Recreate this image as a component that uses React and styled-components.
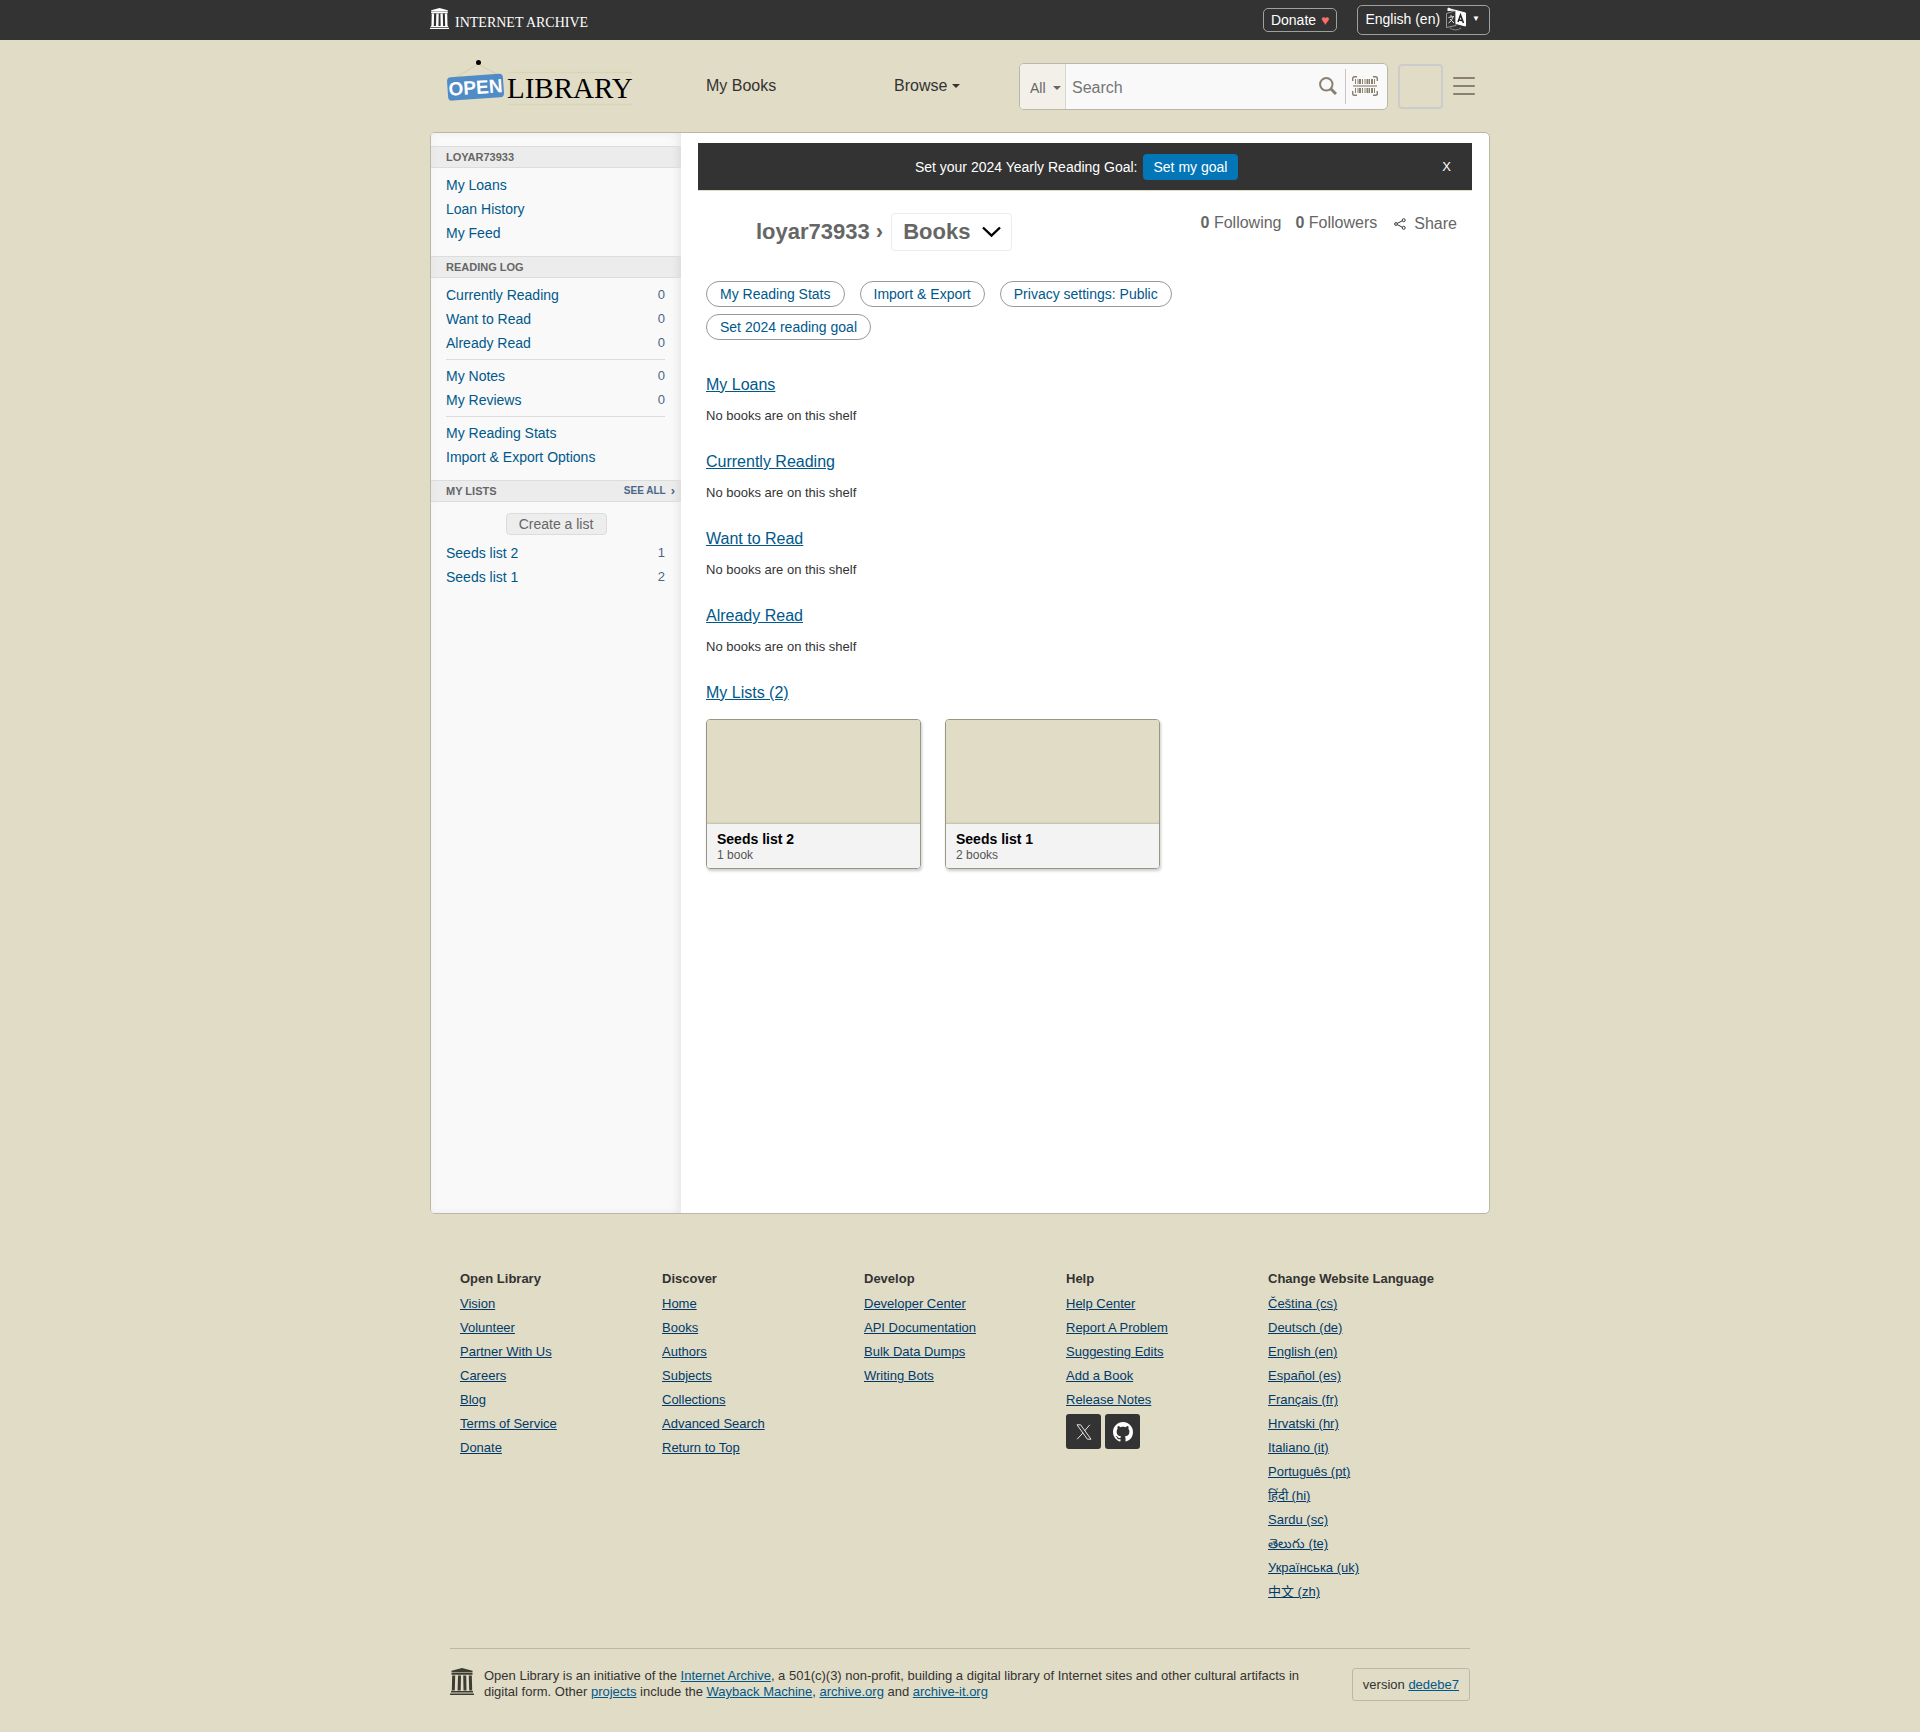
import React from "react";
import styled, { createGlobalStyle, css } from "styled-components";

const beige = "#e1dcc5";
const link = "#00588b";
const sans = `"Liberation Sans", Arial, "Noto Sans CJK SC", sans-serif`;

const GlobalStyle = createGlobalStyle`
  *, *::before, *::after { box-sizing: border-box; }
  body { margin: 0; background: ${beige}; color: #333; font: 14px/20px ${sans}; }
  h1, h2, h3, p, ul { margin: 0; padding: 0; }
  ul { list-style: none; }
  button, input, select { font: inherit; color: inherit; margin: 0; }
  button { cursor: pointer; }
  svg { display: block; flex: none; }
`;

const Wrap = styled.div`
  width: 100%;
  max-width: 1060px;
  margin: 0 auto;
`;

/* ---- top bar ---- */

const TopBar = styled.div`
  background: #333;
  color: #fff;
`;
const TopInner = styled(Wrap)`
  display: flex;
  align-items: center;
  height: 40px;
`;
const ArchiveLink = styled.a`
  margin-right: auto;
  padding-bottom: 2px;
  color: #fff;
`;
const topControl = css`
  display: flex;
  align-items: center;
  color: #fff;
  border: 1px solid #a0a0a0;
  border-radius: 5px;
  background: none;
  text-decoration: none;
`;
const DonateLink = styled.a`
  ${topControl}
  height: 24px;
  padding: 0 7px;
  gap: 5px;
  margin-right: 20px;
`;
const Heart = styled.span`
  color: #ff6f6f;
`;
const LanguageButton = styled.button`
  ${topControl}
  height: 30px;
  padding: 0 9px 2px 7px;
  gap: 6px;
`;
const Caret = styled.span`
  font-size: 8px;
`;

/* ---- header ---- */

const Header = styled.header`
  display: flex;
  align-items: center;
  height: 92px;
  padding: 0 15px;
`;
const LogoLink = styled.a`
  flex: none;
  width: 261px;
  padding-bottom: 8px;
`;
const NavLink = styled.a`
  width: 188px;
  font-size: 16px;
  color: #333;
  text-decoration: none;
`;
const BrowseButton = styled.button`
  display: flex;
  align-items: center;
  gap: 5px;
  width: 125px;
  border: 0;
  padding: 0;
  background: none;
  font-size: 16px;
  color: #333;
`;
const Triangle = styled.span`
  border: 4px solid transparent;
  border-top-color: currentColor;
  border-bottom: 0;
`;
const SearchForm = styled.form`
  display: flex;
  align-items: stretch;
  flex: 1;
  min-width: 0;
  height: 47px;
  padding-right: 3px;
  border: 1px solid #b8b8aa;
  border-radius: 5px;
  background: #f9f9f9;
  overflow: hidden;
`;
const FacetLabel = styled.label`
  display: flex;
  align-items: center;
  width: 46px;
  padding: 4px 4px 0 10px;
  background: #f3f0e9;
  border-right: 1px solid #d8d6cf;
  color: #666;
`;
const FacetSelect = styled.select`
  appearance: none;
  width: 24px;
  border: 0;
  padding: 0;
  background: none;
`;
const SearchInput = styled.input`
  flex: 1;
  min-width: 0;
  border: 0;
  padding: 4px 6px 0;
  background: none;
  font-size: 16px;
  outline: none;
  &::placeholder { color: #757575; opacity: 1; }
`;
const IconButton = styled.button`
  display: flex;
  align-items: center;
  justify-content: center;
  width: ${(p) => p.$w}px;
  border: 0;
  padding: 0;
  background: none;
`;
const SearchRule = styled.span`
  width: 1px;
  margin: 5px 0;
  background: #c8c5bf;
`;
const Avatar = styled.a`
  width: 45px;
  height: 45px;
  margin: 0 10px;
  border: 2px solid #ccc;
  border-radius: 4px;
`;

/* ---- content ---- */

const Content = styled(Wrap)`
  display: flex;
  min-height: 1082px;
  border: 1px solid #b8b8a6;
  border-radius: 5px;
  background: #fff;
  overflow: hidden;
`;
const Sidebar = styled.nav`
  flex: none;
  width: 250px;
  padding-top: 13px;
  background: #f9f9f9;
  box-shadow: inset -6px 0 12px -6px #e2e2e2, inset 0 0 8px #f1f1f1;
`;
const SideHeading = styled.h2`
  display: flex;
  align-items: center;
  height: 22px;
  padding: 0 6px 0 15px;
  border: solid #dcdcdc;
  border-width: 1px 0;
  background: rgba(0, 0, 0, 0.05);
  font-size: 11px;
  line-height: 20px;
  text-transform: uppercase;
  color: #666;
`;
const SeeAll = styled.a`
  margin-left: auto;
  font-size: 10px;
  color: #4b6587;
  text-decoration: none;
`;
const SeeChevron = styled.span`
  margin-left: 5px;
  font-size: 13px;
  color: #4b6587;
`;
const SideList = styled.ul`
  padding: ${(p) => (p.$tight ? "0 16px 11px 15px" : "5px 16px 11px 15px")};
`;
const SideItem = styled.li`
  ${(p) => p.$rule && css`
    border-top: 1px solid #dcdcdc;
    margin-top: 4px;
    padding-top: 4px;
  `}
`;
const SideLink = styled.a`
  display: flex;
  justify-content: space-between;
  line-height: 24px;
  color: ${link};
  text-decoration: none;
`;
const Count = styled.span`
  font-size: 13px;
  color: #4b6587;
`;
const CreateButton = styled.button`
  display: block;
  width: 101px;
  height: 22px;
  margin: 11px auto 6px;
  border: 1px solid #dcdcdc;
  border-radius: 4px;
  padding: 0;
  background: #ededed;
  line-height: 20px;
  color: #666;
`;

const Main = styled.main`
  flex: 1;
  min-width: 0;
  padding: 10px 17px 40px;
`;
const Banner = styled.div`
  display: flex;
  align-items: center;
  height: 48px;
  padding: 0 21px 0 13px;
  border-bottom: 1px solid ${beige};
  background: #333;
  color: #fff;
`;
const BannerText = styled.div`
  display: flex;
  flex: 1;
  align-items: center;
  justify-content: center;
  gap: 5px;
`;
const GoalButton = styled.button`
  height: 26px;
  border: 0;
  border-radius: 4px;
  padding: 0 11px;
  background: #0376b8;
  color: #fff;
`;
const CloseButton = styled.button`
  border: 0;
  padding: 0;
  background: none;
  font-size: 13px;
  color: #fff;
`;
const Body = styled.div`
  padding: 0 8px;
`;
const TitleRow = styled.div`
  display: flex;
  align-items: flex-start;
  padding: 22px 7px 0 50px;
  color: #666;
`;
const Title = styled.h1`
  display: flex;
  align-items: center;
  gap: 8px;
  font-size: 22px;
  line-height: 36px;
`;
const ShelfButton = styled.button`
  display: flex;
  align-items: center;
  gap: 12px;
  height: 38px;
  border: 1px solid #ececec;
  border-radius: 4px;
  padding: 0 10px 0 11px;
  background: none;
  font-weight: bold;
`;
const Stats = styled.div`
  display: flex;
  gap: 14px;
  margin-left: auto;
  font-size: 16px;
`;
const ShareButton = styled.button`
  display: flex;
  align-items: center;
  gap: 8px;
  border: 0;
  padding: 1px 0 0 3px;
  background: none;
`;
const Pills = styled.div`
  display: flex;
  flex-wrap: wrap;
  gap: 7px 15px;
  max-width: 500px;
  margin: 30px 0 34px;
`;
const Pill = styled.a`
  height: 26px;
  padding: 0 13px;
  border: 1px solid #999;
  border-radius: 13px;
  line-height: 24px;
  color: ${link};
  text-decoration: none;
`;
const Shelf = styled.section`
  height: 77px;
`;
const ShelfTitle = styled.h2`
  font-size: 16px;
  font-weight: normal;
  line-height: 22px;
  a { color: ${link}; }
`;
const ShelfEmpty = styled.p`
  padding-top: 10px;
  font-size: 13px;
`;
const Cards = styled.div`
  display: flex;
  flex-wrap: wrap;
  gap: 24px;
  padding-top: 15px;
`;
const Card = styled.a`
  width: 215px;
  border: 1px solid #999783;
  border-radius: 4px;
  box-shadow: 1px 2px 3px rgba(0, 0, 0, 0.2);
  overflow: hidden;
  color: #000;
  text-decoration: none;
`;
const CardCover = styled.div`
  height: 104px;
  background: ${beige};
  box-shadow: inset 0 -3px 2px -2px #c2bda5;
`;
const CardText = styled.div`
  padding: 7px 10px 6px;
  background: #f3f3f3;
`;
const CardTitle = styled.h3`
  font-size: 14px;
  line-height: 17px;
`;
const CardMeta = styled.p`
  font-size: 12px;
  line-height: 14px;
  color: #555;
`;

/* ---- footer ---- */

const Footer = styled.footer`
  width: 100%;
  max-width: 1020px;
  margin: 0 auto;
  padding-bottom: 29px;
  font-size: 13px;
`;
const FooterColumns = styled.div`
  display: grid;
  grid-template-columns: repeat(5, 1fr);
  padding: 53px 0 44px 10px;
  line-height: 24px;
`;
const FooterTitle = styled.h2`
  margin-bottom: 1px;
  font-size: 13px;
  line-height: 24px;
`;
const FooterItem = styled.li`
  height: 24px;
  a { color: #003a6b; }
`;
const Socials = styled.div`
  display: flex;
  gap: 4px;
  padding-top: 2px;
`;
const Social = styled.a`
  display: flex;
  align-items: center;
  justify-content: center;
  width: 35px;
  height: 35px;
  border-radius: 3px;
  background: #333;
  color: #fff;
`;
const Colophon = styled.div`
  display: flex;
  align-items: flex-start;
  gap: 10px;
  padding-top: 19px;
  border-top: 1px solid #b9b9a8;
  a { color: ${link}; }
`;
const About = styled.p`
  max-width: 850px;
  margin-right: auto;
  line-height: 16px;
`;
const Version = styled.div`
  padding: 0 10px;
  border: 1px solid #b9b9a8;
  border-radius: 3px;
  line-height: 31px;
  white-space: nowrap;
`;

/* ---- drawings ---- */

const Temple = ({ w, h, color }) => (
  <svg width={w} height={h} viewBox="0 0 24 27" fill={color}>
    <path d="M12 0 22.500 2.800v1.400h-21V2.800z" />
    <path d="M1.500 4.800h21v2h-21zM0 25.400h24V27H0zM1 23h22v1.400H1z" />
    <path d="M2.200 7.500h3l-.4 15H1.800zM8 7.500h3l-.3 15H7.600zM13.200 7.500h3l.3 15h-3zM18.800 7.500h3l.4 15h-3z" />
  </svg>
);

const ArchiveLogo = () => (
  <svg width="164" height="24" viewBox="0 0 164 24" fill="#fff" role="img" aria-label="Internet Archive">
    <g transform="translate(0 1) scale(.79 .78)">
      <path d="M12 0 22.500 2.800v1.400h-21V2.800z" />
      <path d="M1.500 4.500h21v2.300h-21zM0 25.400h24V27H0zM1 23h22v1.400H1z" />
      <path d="M2.200 7h3l-.4 16H1.800zM8 7h3l-.3 16H7.600zM13.200 7h3l.3 16h-3zM18.800 7h3l.4 16h-3z" />
    </g>
    <text x="25" y="20" fontFamily="Liberation Serif, serif" fontSize="14">INTERNET ARCHIVE</text>
  </svg>
);

const OpenLibraryLogo = () => (
  <svg width="190" height="52" viewBox="0 0 190 52" role="img" aria-label="Open Library">
    <path d="M5 25 33 8l24 13" fill="none" stroke="#d3ccae" />
    <circle cx="33.500" cy="6.500" r="2.500" />
    <path d="M63 16.500h124M63 48.500h124" stroke="#d9d3ba" strokeWidth="1.500" />
    <g transform="rotate(-4 30 31)">
      <rect x="2.500" y="19.500" width="56" height="23.500" rx="4" fill="#4f8bc4" />
      <text x="30.500" y="38" textAnchor="middle" fontFamily="Liberation Sans, sans-serif" fontWeight="bold" fontSize="19" fill="#fff">OPEN</text>
    </g>
    <text x="62" y="42" fontFamily="Liberation Serif, serif" fontSize="29">LIBRARY</text>
  </svg>
);

const TranslateIcon = () => (
  <svg width="20" height="24" viewBox="0 0 20 24" fill="none" stroke="#ddd">
    <path d="M.5 6.500 10 3.500v15L.5 20.500z" stroke="#999" />
    <path d="M2.500 10.500 8 9.500M5 8v2M7 10c-.8 2.500-2.500 5-4.500 6M4 12l4 4" />
    <path d="M10 3.500 19.500 6v13L10 16.500z" fill="#fff" stroke="#fff" />
    <path d="m12 15 2.500-7 3 8M13 13l4 .8" stroke="#222" strokeWidth="1.500" />
    <path d="M2 4V1l4 1.500 4 1" fill="#fff" stroke="#fff" />
    <path d="M4 21c3 2.500 8 2.500 11 0" stroke="#888" />
  </svg>
);

const SearchIcon = () => (
  <svg width="18" height="18" viewBox="0 0 18 18" fill="none" stroke="#8b7f70" strokeWidth="2">
    <circle cx="7.300" cy="7.300" r="6.200" />
    <path d="m12 12 5 5" strokeWidth="3" />
  </svg>
);

const BarcodeIcon = () => (
  <svg width="26" height="20" viewBox="0 0 26 20" fill="none" stroke="#8b7f70">
    <path d="M.7 5V2.500Q.7.700 2.500.7H5M21 .7h2.500q1.800 0 1.800 1.800V5M.7 15v2.500q0 1.800 1.800 1.800H5M21 19.300h2.500q1.800 0 1.800-1.800V15" strokeWidth="1.400" />
    <path d="M3.500 3v5M6 3v5M10.500 3v5M13 3v5M17.500 3v5M22.500 3v5M3.500 12v5M6 12v5M10.500 12v5M13 12v5M17.500 12v5M22.500 12v5" />
    <path d="M8 3v5M15.500 3v5M20 3v5M8 12v5M15.500 12v5M20 12v5" strokeWidth="2" />
    <path d="M1 10h24" stroke="#b9b2a8" strokeWidth="2" />
  </svg>
);

const MenuIcon = () => (
  <svg width="22" height="18" viewBox="0 0 22 18" stroke="#8b7f70" strokeWidth="2" strokeLinecap="round">
    <path d="M1 1h20M1 9h20M1 17h20" />
  </svg>
);

const ChevronIcon = () => (
  <svg width="19" height="12" viewBox="0 0 19 12" fill="none" stroke="#000" strokeWidth="2.400">
    <path d="m1 1.500 8.500 8 8.500-8" />
  </svg>
);

const ShareIcon = () => (
  <svg width="12" height="12" viewBox="0 0 12 12" fill="none" stroke="#333">
    <circle cx="2" cy="6" r="1.400" />
    <circle cx="9.700" cy="2.200" r="1.500" />
    <circle cx="9.700" cy="9.800" r="1.500" />
    <path d="m3.300 5.300 5-2.500M3.300 6.700l5 2.500" />
  </svg>
);

const XIcon = () => (
  <svg width="16" height="16" viewBox="0 0 16 16" fill="none" stroke="#e6e6e6">
    <path d="M1 .8h3.600L15 15.200h-3.600zM13.800.8 8.600 6.800M7 8.800 1.200 15.200" />
  </svg>
);

const GithubIcon = () => (
  <svg width="20" height="20" viewBox="0 0 16 16" fill="currentColor">
    <path d="M8 0C3.580 0 0 3.580 0 8c0 3.540 2.290 6.530 5.470 7.590.4.070.55-.17.55-.38 0-.19-.01-.82-.01-1.490-2.010.37-2.530-.49-2.690-.94-.09-.23-.48-.94-.82-1.130-.28-.15-.68-.52-.01-.53.63-.01 1.080.58 1.230.82.72 1.210 1.870.87 2.330.66.07-.52.28-.87.51-1.070-1.780-.2-3.640-.89-3.640-3.950 0-.87.31-1.590.82-2.150-.08-.2-.36-1.020.08-2.120 0 0 .67-.21 2.200.82.64-.18 1.320-.27 2-.27s1.360.09 2 .27c1.530-1.040 2.200-.82 2.200-.82.44 1.100.16 1.920.08 2.120.51.56.82 1.270.82 2.150 0 3.070-1.870 3.750-3.650 3.950.29.25.54.73.54 1.480 0 1.070-.01 1.930-.01 2.200 0 .21.15.46.55.38A8.010 8.010 0 0 0 16 8c0-4.420-3.580-8-8-8z" />
  </svg>
);

/* ---- data ---- */

const account = [["My Loans"], ["Loan History"], ["My Feed"]];
const readingLog = [
  ["Currently Reading", 0], ["Want to Read", 0], ["Already Read", 0],
  ["My Notes", 0, true], ["My Reviews", 0],
  ["My Reading Stats", null, true], ["Import & Export Options"],
];
const lists = [["Seeds list 2", 1], ["Seeds list 1", 2]];
const shelves = ["My Loans", "Currently Reading", "Want to Read", "Already Read"];
const pills = ["My Reading Stats", "Import & Export", "Privacy settings: Public", "Set 2024 reading goal"];
const footer = [
  ["Open Library", ["Vision", "Volunteer", "Partner With Us", "Careers", "Blog", "Terms of Service", "Donate"]],
  ["Discover", ["Home", "Books", "Authors", "Subjects", "Collections", "Advanced Search", "Return to Top"]],
  ["Develop", ["Developer Center", "API Documentation", "Bulk Data Dumps", "Writing Bots"]],
  ["Help", ["Help Center", "Report A Problem", "Suggesting Edits", "Add a Book", "Release Notes"]],
  ["Change Website Language", ["Čeština (cs)", "Deutsch (de)", "English (en)", "Español (es)", "Français (fr)", "Hrvatski (hr)", "Italiano (it)", "Português (pt)", "हिंदी (hi)", "Sardu (sc)", "తెలుగు (te)", "Українська (uk)", "中文 (zh)"]],
];

const SideLinks = ({ items, tight }) => (
  <SideList $tight={tight}>
    {items.map(([label, count, rule]) => (
      <SideItem key={label} $rule={rule}>
        <SideLink href="#">
          {label}
          {count != null && <Count>{count}</Count>}
        </SideLink>
      </SideItem>
    ))}
  </SideList>
);

export default function App() {
  return (
    <>
      <GlobalStyle />
      <TopBar>
        <TopInner>
          <ArchiveLink href="#"><ArchiveLogo /></ArchiveLink>
          <DonateLink href="#">Donate <Heart>♥</Heart></DonateLink>
          <LanguageButton type="button">English (en) <TranslateIcon /><Caret>▼</Caret></LanguageButton>
        </TopInner>
      </TopBar>
      <Wrap>
        <Header>
          <LogoLink href="#"><OpenLibraryLogo /></LogoLink>
          <NavLink href="#">My Books</NavLink>
          <BrowseButton type="button">Browse<Triangle /></BrowseButton>
          <SearchForm onSubmit={(e) => e.preventDefault()}>
            <FacetLabel>
              <FacetSelect aria-label="Search by"><option>All</option></FacetSelect>
              <Triangle />
            </FacetLabel>
            <SearchInput type="text" placeholder="Search" aria-label="Search" />
            <IconButton $w={34} type="submit" aria-label="Search"><SearchIcon /></IconButton>
            <SearchRule />
            <IconButton $w={38} type="button" aria-label="Scan barcode"><BarcodeIcon /></IconButton>
          </SearchForm>
          <Avatar href="#" aria-label="Profile" />
          <IconButton $w={22} type="button" aria-label="Menu"><MenuIcon /></IconButton>
        </Header>
      </Wrap>
      <Content>
        <Sidebar>
          <SideHeading>loyar73933</SideHeading>
          <SideLinks items={account} />
          <SideHeading>Reading Log</SideHeading>
          <SideLinks items={readingLog} />
          <SideHeading>My Lists <SeeAll href="#">See all</SeeAll><SeeChevron>›</SeeChevron></SideHeading>
          <CreateButton type="button">Create a list</CreateButton>
          <SideLinks items={lists} tight />
        </Sidebar>
        <Main>
          <Banner>
            <BannerText>
              Set your 2024 Yearly Reading Goal:
              <GoalButton type="button">Set my goal</GoalButton>
            </BannerText>
            <CloseButton type="button" aria-label="Close">X</CloseButton>
          </Banner>
          <Body>
            <TitleRow>
              <Title>
                <span>loyar73933 ›</span>
                <ShelfButton type="button">Books <ChevronIcon /></ShelfButton>
              </Title>
              <Stats>
                <span><b>0</b> Following</span>
                <span><b>0</b> Followers</span>
                <ShareButton type="button"><ShareIcon /> Share</ShareButton>
              </Stats>
            </TitleRow>
            <Pills>
              {pills.map((p) => <Pill key={p} href="#">{p}</Pill>)}
            </Pills>
            {shelves.map((s) => (
              <Shelf key={s}>
                <ShelfTitle><a href="#">{s}</a></ShelfTitle>
                <ShelfEmpty>No books are on this shelf</ShelfEmpty>
              </Shelf>
            ))}
            <ShelfTitle><a href="#">My Lists (2)</a></ShelfTitle>
            <Cards>
              {lists.map(([name, n]) => (
                <Card key={name} href="#">
                  <CardCover />
                  <CardText>
                    <CardTitle>{name}</CardTitle>
                    <CardMeta>{n} {n === 1 ? "book" : "books"}</CardMeta>
                  </CardText>
                </Card>
              ))}
            </Cards>
          </Body>
        </Main>
      </Content>
      <Footer>
        <FooterColumns>
          {footer.map(([title, items]) => (
            <div key={title}>
              <FooterTitle>{title}</FooterTitle>
              <ul>
                {items.map((t) => <FooterItem key={t}><a href="#">{t}</a></FooterItem>)}
              </ul>
              {title === "Help" && (
                <Socials>
                  <Social href="#" aria-label="X"><XIcon /></Social>
                  <Social href="#" aria-label="GitHub"><GithubIcon /></Social>
                </Socials>
              )}
            </div>
          ))}
        </FooterColumns>
        <Colophon>
          <Temple w={24} h={27} color="#3c3c32" />
          <About>
            Open Library is an initiative of the <a href="#">Internet Archive</a>, a 501(c)(3) non-profit, building a digital library of Internet sites and other cultural artifacts in digital form. Other <a href="#">projects</a> include the <a href="#">Wayback Machine</a>, <a href="#">archive.org</a> and <a href="#">archive-it.org</a>
          </About>
          <Version>version <a href="#">dedebe7</a></Version>
        </Colophon>
      </Footer>
    </>
  );
}
